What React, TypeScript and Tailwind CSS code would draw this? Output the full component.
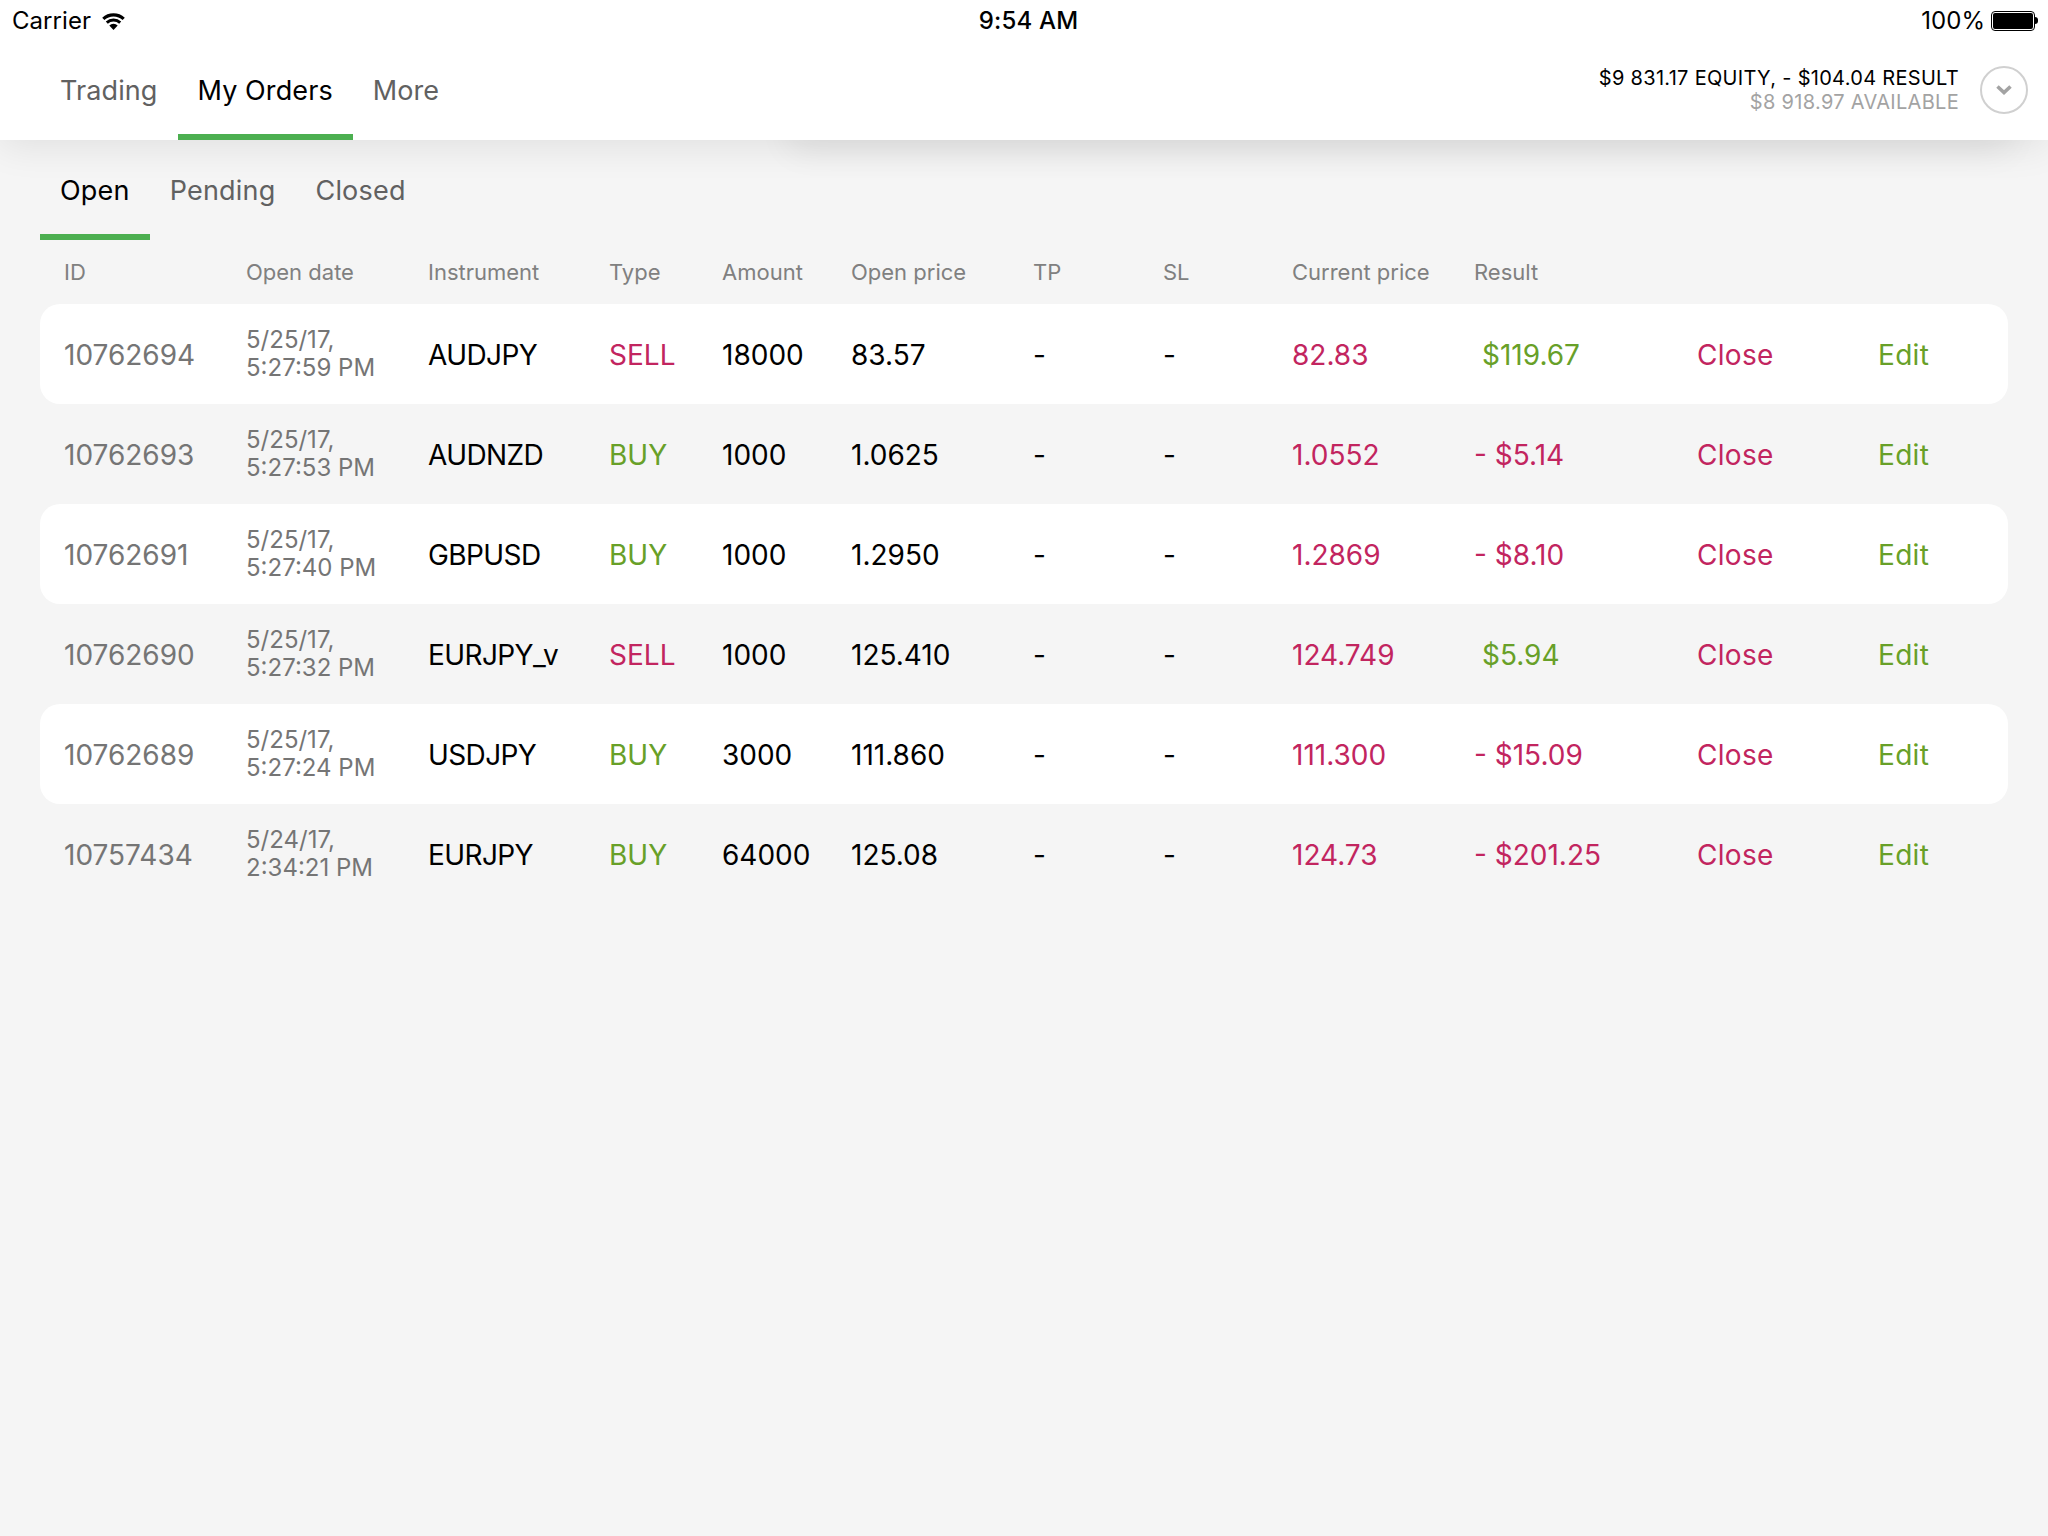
const rows = [
  { id: "10762694", d: "5/25/17,", t: "5:27:59 PM", ins: "AUDJPY", type: "SELL", amt: "18000", open: "83.57", cur: "82.83", res: "$119.67", pos: true },
  { id: "10762693", d: "5/25/17,", t: "5:27:53 PM", ins: "AUDNZD", type: "BUY", amt: "1000", open: "1.0625", cur: "1.0552", res: "- $5.14", pos: false },
  { id: "10762691", d: "5/25/17,", t: "5:27:40 PM", ins: "GBPUSD", type: "BUY", amt: "1000", open: "1.2950", cur: "1.2869", res: "- $8.10", pos: false },
  { id: "10762690", d: "5/25/17,", t: "5:27:32 PM", ins: "EURJPY_v", type: "SELL", amt: "1000", open: "125.410", cur: "124.749", res: "$5.94", pos: true },
  { id: "10762689", d: "5/25/17,", t: "5:27:24 PM", ins: "USDJPY", type: "BUY", amt: "3000", open: "111.860", cur: "111.300", res: "- $15.09", pos: false },
  { id: "10757434", d: "5/24/17,", t: "2:34:21 PM", ins: "EURJPY", type: "BUY", amt: "64000", open: "125.08", cur: "124.73", res: "- $201.25", pos: false },
];

const headers = ["ID", "Open date", "Instrument", "Type", "Amount", "Open price", "TP", "SL", "Current price", "Result"];

export default function App() {
  return (
    <div className="isolate min-h-screen bg-[#f5f5f5] font-['Inter','Liberation_Sans',sans-serif] text-black">
      <header className="relative bg-white h-[140px] shadow-[0_6px_36px_rgba(0,0,0,0.09)]">
        <div className="absolute -z-10 left-[790px] right-[40px] top-[90px] h-[50px] shadow-[0_10px_34px_rgba(0,0,0,0.07)]" />
        <div className="relative flex h-[40px] items-center justify-between pl-3 pr-[10px] pt-[1px] text-[24px] tracking-[0.05px]">
          <div className="flex items-center gap-[9px]">
            <span>Carrier</span>
            <svg width="27" height="20" viewBox="0 0 26 20" fill="black">
              <path d="M13 19l-4.2-4.6a6 6 0 0 1 8.4 0z" />
              <path d="M7.3 12.7l-2-2.2a11.2 11.2 0 0 1 15.4 0l-2 2.2a8.4 8.4 0 0 0-11.4 0z" />
              <path d="M3.9 9l-2.2-2.3a16.6 16.6 0 0 1 22.6 0L22.1 9a13.4 13.4 0 0 0-18.2 0z" />
            </svg>
          </div>
          <span className="absolute left-0 right-0 pl-[9px] text-center font-medium tracking-[0.2px]">9:54 AM</span>
          <div className="flex items-center gap-[6px]">
            <span>100%</span>
            <div className="flex items-center">
              <div className="w-[44px] h-[20px] rounded-[4px] border border-black p-[1px]">
                <div className="w-full h-full rounded-[2px] bg-black" />
              </div>
              <div className="w-[3px] h-[7px] rounded-r-full bg-black" />
            </div>
          </div>
        </div>
        <div className="flex h-[100px] items-start justify-between pr-5">
          <nav className="flex pl-5 text-[27px] tracking-[0.1px] text-[#616161]">
            <div className="h-[100px] pl-10 pr-5 pt-[31px]">Trading</div>
            <div className="h-[100px] px-5 pt-[31px] text-black border-b-[6px] border-[#4caf50]">My Orders</div>
            <div className="h-[100px] px-5 pt-[31px]">More</div>
          </nav>
          <div className="flex items-center gap-[21px] pt-[26px]">
            <div className="text-right text-[20px] leading-[24px] tracking-[0.3px]">
              <div>$9 831.17 EQUITY, - $104.04 RESULT</div>
              <div className="text-[#a3a3a3]">$8 918.97 AVAILABLE</div>
            </div>
            <div className="flex h-[48px] w-[48px] items-center justify-center rounded-full border-2 border-[#d0d0d0]">
              <svg width="16" height="10" viewBox="0 0 16 10" fill="none" stroke="#a3a3a3" strokeWidth="3.6">
                <path d="M1.5 1.5L8 7.5l6.5-6" />
              </svg>
            </div>
          </div>
        </div>
      </header>

      <main className="px-10">
        <div className="flex h-[100px] text-[27px] tracking-[0.2px] text-[#616161]">
          <div className="h-[100px] px-5 pt-[31px] text-black border-b-[6px] border-[#4caf50]">Open</div>
          <div className="h-[100px] px-5 pt-[31px]">Pending</div>
          <div className="h-[100px] px-5 pt-[31px]">Closed</div>
        </div>
        <div className="grid h-[64px] grid-cols-[182px_182px_181px_113px_129px_182px_130px_129px_182px_223px_181px_130px] items-center pl-6 pt-[1px] text-[22px] text-[#808080]">
          {headers.map((h) => (
            <div key={h}>{h}</div>
          ))}
        </div>
        <div className="flex flex-col">
          {rows.map((r, i) => (
            <div
              key={r.id}
              className={`grid h-[100px] grid-cols-[182px_182px_181px_113px_129px_182px_130px_129px_182px_223px_181px_130px] items-center rounded-[20px] pl-6 pt-[2px] text-[28px] ${i % 2 === 0 ? "bg-white" : ""}`}
            >
              <div className="text-[#757575]">{r.id}</div>
              <div className="-mt-[2px] text-[24px] leading-[28px] text-[#757575]">
                <div>{r.d}</div>
                <div>{r.t}</div>
              </div>
              <div className="tracking-[-0.6px]">{r.ins}</div>
              <div className={r.type === "SELL" ? "text-[#c2255f]" : "text-[#68a028]"}>{r.type}</div>
              <div>{r.amt}</div>
              <div>{r.open}</div>
              <div>-</div>
              <div>-</div>
              <div className="text-[#c2255f]">{r.cur}</div>
              <div className={r.pos ? "pl-2 text-[#68a028]" : "text-[#c2255f]"}>{r.res}</div>
              <div className="text-[#c2255f] tracking-[0.3px]">Close</div>
              <div className="text-[#68a028] tracking-[0.3px]">Edit</div>
            </div>
          ))}
        </div>
      </main>
    </div>
  );
}
